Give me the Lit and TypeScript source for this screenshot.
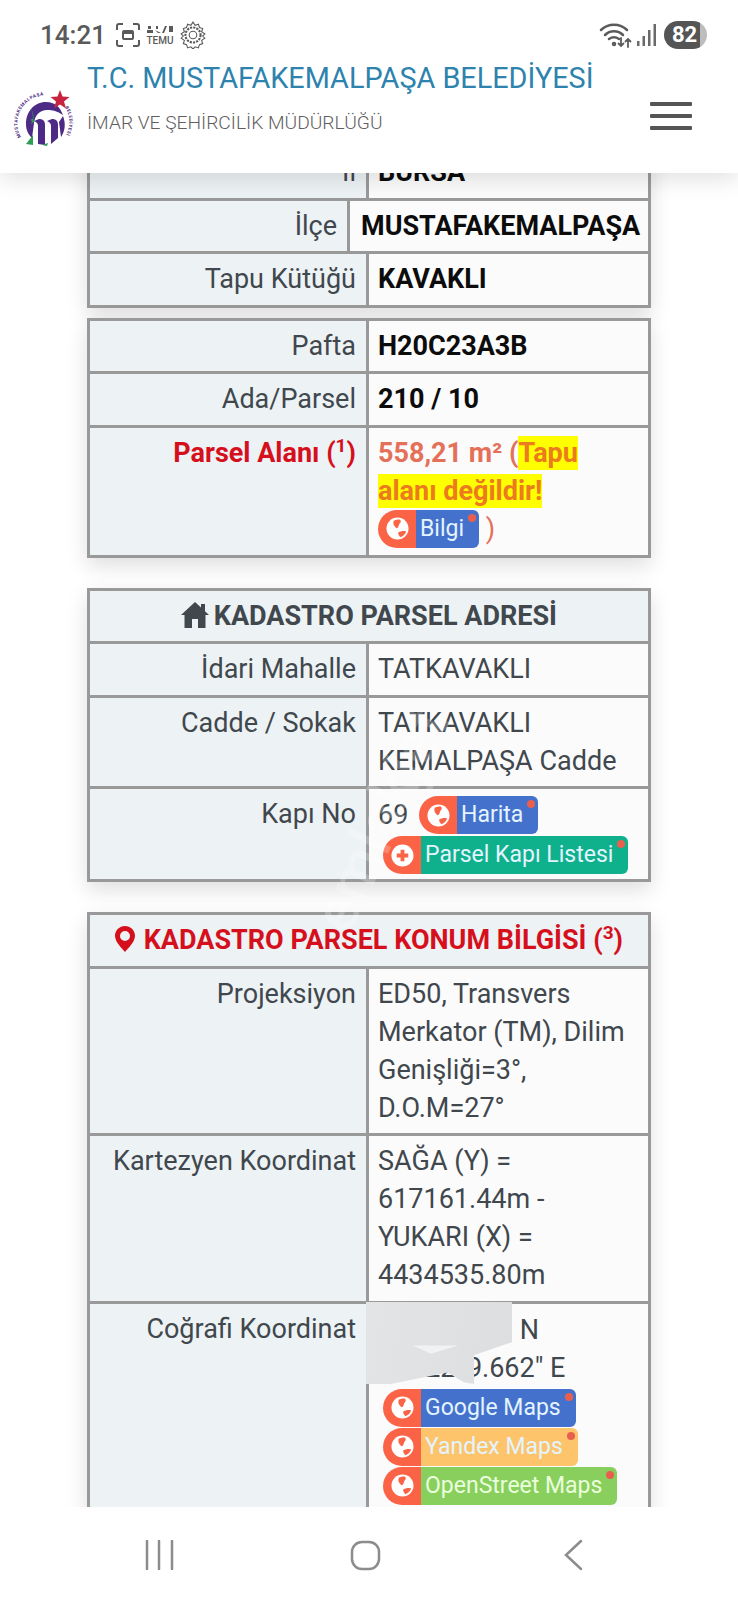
import { LitElement, css, html } from "lit";
import { customElement } from "lit/decorators.js";

const globe = html`<svg class="glyph" viewBox="0 0 24 24">
  <circle cx="12" cy="12" r="11.5" fill="#fff" />
  <path d="M8 4c2-1 5-2 7-1 1 2 0 3-1 4l-1 3c-1 2-2 2-3 1-1-2-3-2-2-7z" fill="#fb6346" />
  <path d="M13 16c2-1 5-2 8-1-1 3-3 5-6 6-1-1-3-3-2-5z" fill="#fb6346" />
</svg>`;

const plus = html`<svg class="glyph" viewBox="0 0 24 24">
  <circle cx="12" cy="12" r="11.5" fill="#fff" />
  <path d="M10 6h4v4h4v4h-4v4h-4v-4H6v-4h4z" fill="#fb6346" />
</svg>`;

const pill = (label: string, colour: string, icon = globe) =>
  html`<span class="pill ${colour}"
    ><span class="pill-icon">${icon}</span
    ><span class="pill-label">${label}<i class="dot"></i></span
  ></span>`;

const logo = html`<svg class="logo" viewBox="0 0 70 70">
  <defs>
    <path id="ring" d="M11 52A28 28 0 0 1 45 12" />
    <path id="ring2" d="M55 22A28 28 0 0 1 55 52" />
  </defs>
  <path
    d="M36 17C24 17 16 27 16 39c0 6 2 10 6 14l2-15c1-8 6-13 13-13 6 0 10 1 16 5-3-8-8-13-17-13z"
    fill="#4c2a85"
  />
  <path d="M53 31c3 8 2 15-2 21l-2-15z" fill="#4c2a85" />
  <path d="M29 34c4 0 6 2 6 6v20l-7-1V41c0-2-1-4-4-5z" fill="#4c2a85" />
  <path d="M42 34c4 0 6 2 6 6v13l-7 6V41c0-2-1-4-4-5z" fill="#4c2a85" />
  <path d="M21 22l2 7 1 4-4 2 2 1-1 3 3-2z" fill="#2f9b57" />
  <path d="M16 59l7-9v10z" fill="#2f9b57" />
  <path d="M32 60l6-2-1 3z" fill="#2f9b57" />
  <path d="M50 5l2.500 6.500 7 .5-5.500 4.500 2 7-6-4-6 4 2-7-5.500-4.500 7-.5z" fill="#c9243f" />
  <text class="ring-text"><textPath href="#ring" textLength="56">MUSTAFAKEMALPAŞA</textPath></text>
  <text class="ring-text"><textPath href="#ring2" textLength="29">BELEDİYESİ</textPath></text>
</svg>`;

@customElement("app-root")
export class AppRoot extends LitElement {
  static styles = css`
    :host {
      display: block;
      width: 738px;
      height: 1600px;
      overflow: hidden;
      background: #fff;
      font-family: Roboto, "Liberation Sans", sans-serif;
      color: #40474d;
    }

    .screen {
      position: relative;
      height: 1600px;
      display: flex;
      flex-direction: column;
    }

    header {
      position: relative;
      z-index: 2;
      height: 173px;
      flex: none;
      background: #fff;
      box-shadow: 0 6px 22px rgba(0, 0, 0, 0.12);
    }

    .status {
      height: 58px;
      padding: 12px 31px 0 40px;
      box-sizing: border-box;
      display: flex;
      align-items: center;
      color: #5a5a5a;
    }

    .time {
      font-size: 26px;
      font-weight: 500;
      width: 76px;
    }

    .shot {
      width: 24px;
      height: 24px;
    }

    .temu {
      margin: 0 5px 0 6px;
      width: 28px;
      font-size: 10px;
      line-height: 10px;
      font-weight: 500;
      text-align: center;
    }

    .gear {
      width: 28px;
      height: 28px;
    }

    .status-right {
      margin-left: auto;
      display: flex;
      align-items: center;
    }

    .wifi {
      width: 33px;
      height: 28px;
    }

    .signal {
      width: 20px;
      height: 24px;
      margin: 0 7px 0 5px;
    }

    .battery {
      width: 43px;
      height: 28px;
      border-radius: 14px;
      background: linear-gradient(to right, #555 84%, #bdbdbd 84%);
      color: #fff;
      font-size: 22px;
      font-weight: 700;
      line-height: 28px;
      text-align: center;
      text-indent: -2px;
    }

    .bar {
      display: flex;
      height: 115px;
    }

    .logo {
      width: 70px;
      height: 70px;
      margin: 27px 7px 0 10px;
      flex: none;
    }

    .ring-text {
      font-size: 4.600px;
      font-weight: 700;
      fill: #4c2a85;
    }

    .titles {
      flex: 1;
    }

    .title {
      margin-top: 3px;
      font-size: 28.800px;
      line-height: 34px;
      color: #2d83ad;
      white-space: nowrap;
    }

    .subtitle {
      margin-top: 16px;
      font-size: 19.200px;
      font-weight: 300;
      line-height: 24px;
      color: #5f5f5f;
    }

    .menu {
      width: 42px;
      margin: 44px 46px 0 0;
      display: flex;
      flex-direction: column;
      gap: 8.500px;
    }

    .menu span {
      height: 3.500px;
      background: #555;
      border-radius: 1px;
    }

    main {
      flex: 1;
      min-height: 0;
      overflow: hidden;
      padding: 0 87px;
    }

    .card {
      width: 564px;
      box-sizing: border-box;
      border: 3px solid #999;
      border-top: 0;
      box-shadow: 0 8px 20px rgba(0, 0, 0, 0.13);
      margin-top: 30px;
      font-size: 27px;
      line-height: 38px;
    }

    .card.first {
      margin-top: -29px;
    }

    .card.near {
      margin-top: 10px;
    }

    .row,
    .head {
      border-top: 3px solid #999;
    }

    .row {
      display: grid;
      grid-template-columns: 276px 1fr;
    }

    .row.wide {
      grid-template-columns: 257px 1fr;
    }

    .key {
      padding: 6px 10px 6.600px 0;
      background: #edf2f5;
      text-align: right;
    }

    .val {
      padding: 6px 8px 6.600px 9px;
      border-left: 3px solid #999;
      background: #fbfbfb;
    }

    .val.door {
      padding-bottom: 4.600px;
    }

    .val.place {
      padding-top: 7px;
    }

    b {
      font-weight: 700;
      color: #0c0c0c;
    }

    .wide .val {
      padding: 6px 0 6.600px 11px;
    }

    .head {
      padding: 6px 0 6.600px;
      background: #edf2f5;
      text-align: center;
      font-weight: 700;
      white-space: nowrap;
    }

    .head svg {
      vertical-align: -3px;
      margin-right: -2px;
    }

    .head.red svg {
      margin-right: 2px;
    }

    .red {
      color: #d5101c;
      font-weight: 700;
    }

    sup {
      font-size: 19px;
      line-height: 0;
    }

    .area {
      color: #e5705a;
      font-weight: 700;
    }

    mark {
      padding: 1px 0;
      background: #ffff00;
      color: #ec7a1e;
    }

    .area .close {
      font-weight: 400;
    }

    .pill {
      display: inline-flex;
      height: 38px;
      vertical-align: top;
      line-height: 37px;
      font-size: 23px;
      font-weight: 400;
      color: #e3f4ff;
    }

    .pill-icon {
      width: 38px;
      flex: none;
      display: flex;
      align-items: center;
      justify-content: center;
      background: #fb6346;
      border-radius: 19px 0 0 19px;
    }

    .glyph {
      width: 23px;
      height: 23px;
    }

    .pill-label {
      position: relative;
      padding: 0 15px 0 4px;
      border-radius: 0 6px 6px 0;
    }

    .blue .pill-label {
      background: #4471cc;
    }

    .green .pill-label {
      background: #0fb08c;
    }

    .amber .pill-label {
      background: #fdc46c;
    }

    .lime .pill-label {
      background: #88cf5e;
      color: #eaffdc;
    }

    .dot {
      position: absolute;
      top: 4px;
      right: 3px;
      width: 8px;
      height: 8px;
      border-radius: 50%;
      background: #e8604d;
    }

    .pill-row {
      display: flex;
      align-items: flex-start;
      margin-top: 1px;
    }

    .number {
      width: 41px;
      flex: none;
    }

    .stack {
      display: flex;
      flex-direction: column;
      align-items: flex-start;
      gap: 1px;
      padding: 2px 0 0 5px;
    }

    .mask {
      position: absolute;
      z-index: 1;
      left: 366px;
      top: 1302px;
      width: 146px;
      height: 82px;
      background: linear-gradient(100deg, #e3e4e6, #dcdee0);
      clip-path: polygon(
        0 0,
        100% 0,
        100% 49%,
        74% 65%,
        74% 100%,
        67% 98%,
        56% 86%,
        17% 100%,
        0 100%
      );
    }

    .mask::after {
      content: "";
      position: absolute;
      left: 32%;
      top: 53%;
      width: 31%;
      height: 10%;
      background: #f1f2f3;
      clip-path: polygon(0 0, 100% 0, 40% 100%);
    }

    .watermark {
      position: absolute;
      z-index: 1;
      left: 180px;
      top: 783px;
      width: 400px;
      text-align: center;
      transform: rotate(-65deg);
      font-size: 62px;
      font-weight: 500;
      color: rgba(255, 255, 255, 0.22);
      pointer-events: none;
    }

    footer {
      height: 93px;
      padding-top: 3px;
      box-sizing: border-box;
      flex: none;
      background: #fff;
      display: grid;
      grid-template-columns: 175px 1fr 175px;
      align-items: center;
      position: relative;
      z-index: 1;
    }

    footer svg {
      display: block;
    }

    .nav-left {
      justify-self: end;
    }

    .nav-mid {
      justify-self: center;
      margin-right: 7px;
    }
  `;

  render() {
    return html`<div class="screen">
      <header>
        <div class="status">
          <span class="time">14:21</span>
          <svg class="shot" viewBox="0 0 24 24" fill="none" stroke="#5a5a5a" stroke-width="2">
            <path d="M1 7V3q0-2 2-2h4M17 1h4q2 0 2 2v4M23 17v4q0 2-2 2h-4M7 23H3q-2 0-2-2v-4" />
            <rect x="6" y="7" width="12" height="10" rx="2" fill="#5a5a5a" stroke="none" />
            <rect x="8" y="11" width="8" height="4" fill="#fff" stroke="none" />
          </svg>
          <span class="temu">
            <svg width="26" height="9" viewBox="0 0 26 9" fill="#5a5a5a">
              <path d="M1 1h3v3H1zM0 5h6v3H0zM9 1h2v3H9zM8 5l6 3h-3zM18 1l2 0-3 7h-2zM22 1h4v6h-4z" />
            </svg>
            <div>TEMU</div>
          </span>
          <svg class="gear" viewBox="0 0 26 26" fill="none" stroke="#5a5a5a" stroke-width="1">
            <path
              d="M13 1l2 3 3-1 1 3 3 1-1 3 3 2-2 2 2 2-3 2 1 3-3 1-1 3-3-1-2 2-2-2-3 1-1-3-3-1 1-3-3-2 2-2-2-2 3-2-1-3 3-1 1-3 3 1z"
            />
            <circle cx="13" cy="13" r="7" stroke-dasharray="2 1" stroke-width="2" />
            <circle cx="13" cy="13" r="3.500" />
          </svg>
          <div class="status-right">
            <svg class="wifi" viewBox="0 0 33 28" fill="none" stroke="#5a5a5a" stroke-width="2.500" stroke-linecap="round">
              <path d="M2 9c7-7 19-7 26 0M6 14c5-5 13-5 18 0M10 18c3-2 7-2 10 0" />
              <circle cx="15" cy="23" r="1" />
              <path d="M22 17v8m-2.500-2.500L22 25l2.500-2.500M29 26v-8m-2.500 2.500L29 18l2.500 2.500" stroke-width="1.800" />
            </svg>
            <svg class="signal" viewBox="0 0 20 24" fill="#6a6a6a">
              <rect x="0" y="18" width="2.500" height="5" />
              <rect x="5.500" y="13" width="2.500" height="10" />
              <rect x="11" y="7" width="2.500" height="16" />
              <rect x="16.500" y="1" width="2.500" height="22" />
            </svg>
            <div class="battery">82</div>
          </div>
        </div>
        <div class="bar">
          ${logo}
          <div class="titles">
            <div class="title">T.C. MUSTAFAKEMALPAŞA BELEDİYESİ</div>
            <div class="subtitle">İMAR VE ŞEHİRCİLİK MÜDÜRLÜĞÜ</div>
          </div>
          <div class="menu"><span></span><span></span><span></span></div>
        </div>
      </header>

      <main>
        <section class="card first">
          <div class="row"><div class="key">İl</div><div class="val"><b>BURSA</b></div></div>
          <div class="row wide">
            <div class="key">İlçe</div>
            <div class="val"><b>MUSTAFAKEMALPAŞA</b></div>
          </div>
          <div class="row"><div class="key">Tapu Kütüğü</div><div class="val"><b>KAVAKLI</b></div></div>
        </section>

        <section class="card near">
          <div class="row"><div class="key">Pafta</div><div class="val"><b>H20C23A3B</b></div></div>
          <div class="row"><div class="key">Ada/Parsel</div><div class="val"><b>210 / 10</b></div></div>
          <div class="row">
            <div class="key red">Parsel Alanı (<sup>1</sup>)</div>
            <div class="val area">
              558,21 m² (<mark>Tapu alanı değildir!</mark><br />
              ${pill("Bilgi", "blue")} <span class="close">)</span>
            </div>
          </div>
        </section>

        <section class="card">
          <div class="head">
            <svg width="28" height="26" viewBox="0 0 28 26" fill="#40474d">
              <path d="M14 0l6 5.500V2h4v7.200l4 3.800h-3.500v13H17v-9h-6v9H3.500V13H0z" />
            </svg>
            KADASTRO PARSEL ADRESİ
          </div>
          <div class="row"><div class="key">İdari Mahalle</div><div class="val">TATKAVAKLI</div></div>
          <div class="row"><div class="key">Cadde / Sokak</div><div class="val">TATKAVAKLI KEMALPAŞA Cadde</div></div>
          <div class="row">
            <div class="key">Kapı No</div>
            <div class="val door">
              <div class="pill-row"><span class="number">69</span>${pill("Harita", "blue")}</div>
              <div class="stack">${pill("Parsel Kapı Listesi", "green", plus)}</div>
            </div>
          </div>
        </section>

        <section class="card">
          <div class="head red">
            <svg width="20" height="26" viewBox="0 0 20 26">
              <path
                fill-rule="evenodd"
                fill="#d5101c"
                d="M10 0c5.500 0 10 4.300 10 9.800C20 16 13 22.500 10 26 7 22.500 0 16 0 9.800 0 4.300 4.500 0 10 0zm0 5a5 5 0 1 0 0 10 5 5 0 0 0 0-10z"
              />
            </svg>
            KADASTRO PARSEL KONUM BİLGİSİ (<sup>3</sup>)
          </div>
          <div class="row">
            <div class="key">Projeksiyon</div>
            <div class="val">ED50, Transvers Merkator (TM), Dilim Genişliği=3°, D.O.M=27°</div>
          </div>
          <div class="row">
            <div class="key">Kartezyen Koordinat</div>
            <div class="val">SAĞA (Y) = 617161.44m - YUKARI (X) = 4434535.80m</div>
          </div>
          <div class="row">
            <div class="key">Coğrafi Koordinat</div>
            <div class="val place">
              00° 00' 0.0" N<br />
              00° 22' 9.662" E
              <div class="stack">
                ${pill("Google Maps", "blue")} ${pill("Yandex Maps", "amber")}
                ${pill("OpenStreet Maps", "lime")}
              </div>
            </div>
          </div>
        </section>
      </main>

      <footer>
        <svg class="nav-left" width="30" height="30" viewBox="0 0 30 30" stroke="#8c8c8c" stroke-width="2.500" stroke-linecap="round">
          <path d="M2 1v28M14 1v28M27 1v28" />
        </svg>
        <svg class="nav-mid" width="31" height="31" viewBox="0 0 31 31" fill="none" stroke="#8c8c8c" stroke-width="2.500">
          <rect x="2" y="2" width="27" height="27" rx="10" />
        </svg>
        <svg width="22" height="32" viewBox="0 0 22 32" fill="none" stroke="#8c8c8c" stroke-width="2.500" stroke-linecap="round">
          <path d="M18 2L3 16l15 14" />
        </svg>
      </footer>

      <div class="watermark">emlakjet</div>
      <div class="mask"></div>
    </div>`;
  }
}
